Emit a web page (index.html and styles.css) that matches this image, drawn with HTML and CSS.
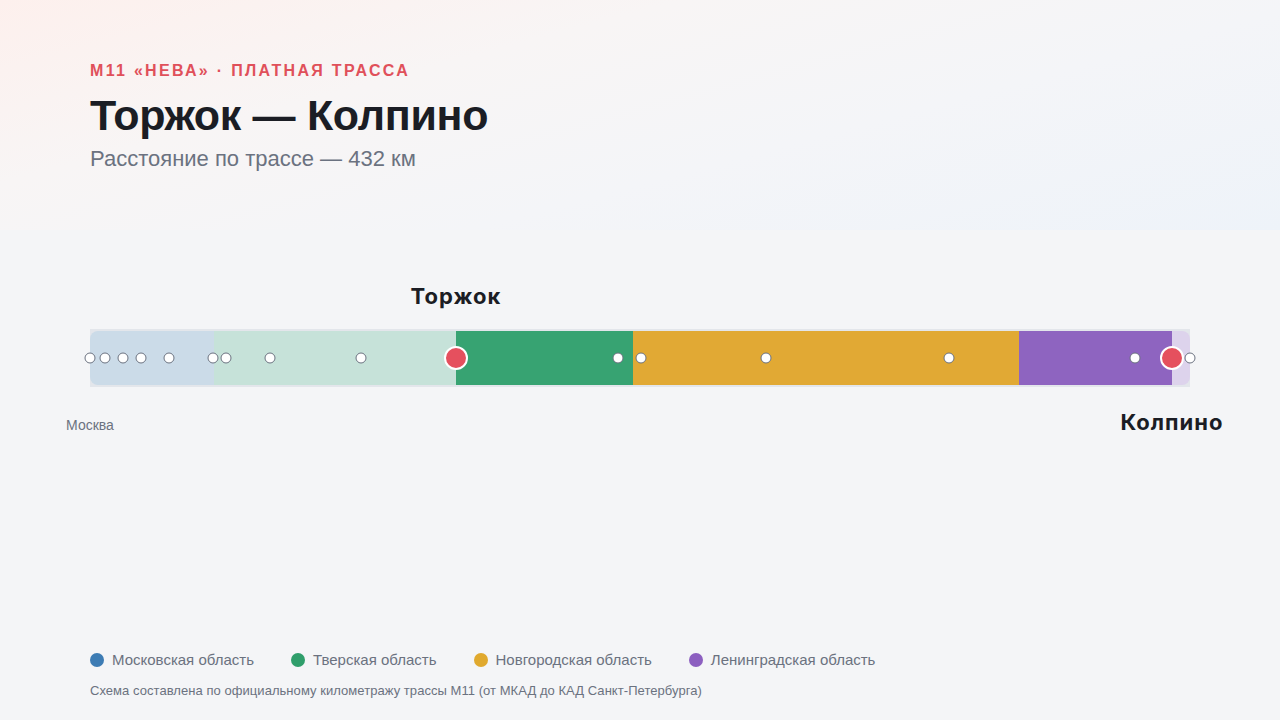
FILE: index.html
```html
<!DOCTYPE html>
<html lang="ru">
<head>
<meta charset="utf-8">
<title>Торжок — Колпино</title>
<link rel="stylesheet" href="styles.css">
</head>
<body>
<div class="page">
  <header class="hero">
    <div class="eyebrow">М11 «НЕВА» · ПЛАТНАЯ ТРАССА</div>
    <h1 class="title">Торжок — Колпино</h1>
    <div class="subtitle">Расстояние по трассе — 432 км</div>
  </header>

  <section class="chart">
    <div class="city-label city-major" style="left:33.27%">Торжок</div>
    <div class="track">
      <div class="seg seg-msk-faded" style="width:11.27%"></div>
      <div class="seg seg-tver-faded" style="width:22%"></div>
      <div class="seg seg-tver" style="width:16.09%"></div>
      <div class="seg seg-novg" style="width:35.09%"></div>
      <div class="seg seg-len" style="width:13.91%"></div>
      <div class="seg seg-len-faded" style="width:1.64%"></div>

      <span class="dot" style="left:0%"></span>
      <span class="dot" style="left:1.36%"></span>
      <span class="dot" style="left:3%"></span>
      <span class="dot" style="left:4.64%"></span>
      <span class="dot" style="left:7.18%"></span>
      <span class="dot" style="left:11.18%"></span>
      <span class="dot" style="left:12.36%"></span>
      <span class="dot" style="left:16.36%"></span>
      <span class="dot" style="left:24.64%"></span>
      <span class="dot" style="left:48%"></span>
      <span class="dot" style="left:50.09%"></span>
      <span class="dot" style="left:61.45%"></span>
      <span class="dot" style="left:78.09%"></span>
      <span class="dot" style="left:95%"></span>
      <span class="dot" style="left:100%"></span>

      <span class="marker" style="left:33.27%"></span>
      <span class="marker" style="left:98.36%"></span>
    </div>
    <div class="city-label city-minor" style="left:0%">Москва</div>
    <div class="city-label city-major city-below" style="left:98.36%">Колпино</div>
  </section>

  <footer class="foot">
    <ul class="legend">
      <li class="legend-item"><span class="swatch sw-msk"></span>Московская область</li>
      <li class="legend-item"><span class="swatch sw-tver"></span>Тверская область</li>
      <li class="legend-item"><span class="swatch sw-novg"></span>Новгородская область</li>
      <li class="legend-item"><span class="swatch sw-len"></span>Ленинградская область</li>
    </ul>
    <p class="note">Схема составлена по официальному километражу трассы М11 (от МКАД до КАД Санкт-Петербурга)</p>
  </footer>
</div>
</body>
</html>
```

FILE: styles.css
```css
* { box-sizing: border-box; }

html, body {
  margin: 0;
  padding: 0;
}

body {
  background: #f4f5f7;
  font-family: "Liberation Sans", Arial, sans-serif;
  color: #1b1d24;
}

.page {
  width: 1280px;
  height: 720px;
  display: flex;
  flex-direction: column;
  overflow: hidden;
}

.hero {
  height: 230px;
  padding: 61px 90px 0;
  background: linear-gradient(165deg, #fdf0ed 0%, #f8f5f5 32%, #f4f5f8 62%, #eef3f9 100%);
}

.eyebrow {
  font-size: 16px;
  line-height: 20px;
  font-weight: 700;
  letter-spacing: 2.3px;
  color: #e0505a;
}

.title {
  margin: 8px 0 0;
  font-size: 43px;
  line-height: 52px;
  font-weight: 700;
  letter-spacing: -0.3px;
  color: #1b1d24;
}

.subtitle {
  margin-top: 4px;
  font-size: 22px;
  line-height: 28px;
  color: #6b7280;
}

.chart {
  position: relative;
  width: 1100px;
  height: 170px;
  margin: 50px 0 0 90px;
  padding-top: 49px;
}

.track {
  position: relative;
  display: flex;
  height: 58px;
  padding: 2px 0;
  background: #e3e6eb;
}

.seg { height: 100%; }
.seg-msk-faded { background: #cbdbe8; border-radius: 8px 0 0 8px; }
.seg-tver-faded { background: #c6e2d9; }
.seg-tver { background: #37a372; }
.seg-novg { background: #e1a934; }
.seg-len { background: #8e64c0; }
.seg-len-faded { background: #ddd3ec; border-radius: 0 8px 8px 0; }

.dot {
  position: absolute;
  top: 50%;
  width: 11px;
  height: 11px;
  border-radius: 50%;
  background: #ffffff;
  border: 1.6px solid #6b7280;
  transform: translate(-50%, -50%);
}

.marker {
  position: absolute;
  top: 50%;
  width: 24px;
  height: 24px;
  border-radius: 50%;
  background: #e5505e;
  border: 2.5px solid #ffffff;
  transform: translate(-50%, -50%);
}

.city-label {
  position: absolute;
  transform: translateX(-50%);
  white-space: nowrap;
}

.city-major {
  top: 2px;
  font-family: Inter, "Liberation Sans", sans-serif;
  font-weight: 700;
  font-size: 22px;
  line-height: 28px;
  letter-spacing: 1px;
  color: #1b1d24;
}

.city-below {
  top: 128px;
}

.city-minor {
  top: 136px;
  font-size: 14px;
  line-height: 18px;
  color: #6b7280;
}

.foot {
  margin-top: auto;
  padding: 0 90px 21px;
}

.legend {
  list-style: none;
  margin: 0;
  padding: 0;
  display: flex;
  gap: 37px;
}

.legend-item {
  display: flex;
  align-items: center;
  gap: 8px;
  font-size: 15px;
  line-height: 20px;
  color: #6b7280;
}

.swatch {
  width: 14px;
  height: 14px;
  border-radius: 50%;
}
.sw-msk { background: #3d7cb4; }
.sw-tver { background: #2f9e6b; }
.sw-novg { background: #e0a92e; }
.sw-len { background: #8c5fc0; }

.note {
  margin: 13px 0 0;
  font-size: 13px;
  line-height: 16px;
  letter-spacing: 0.05px;
  color: #6b7280;
}
```
